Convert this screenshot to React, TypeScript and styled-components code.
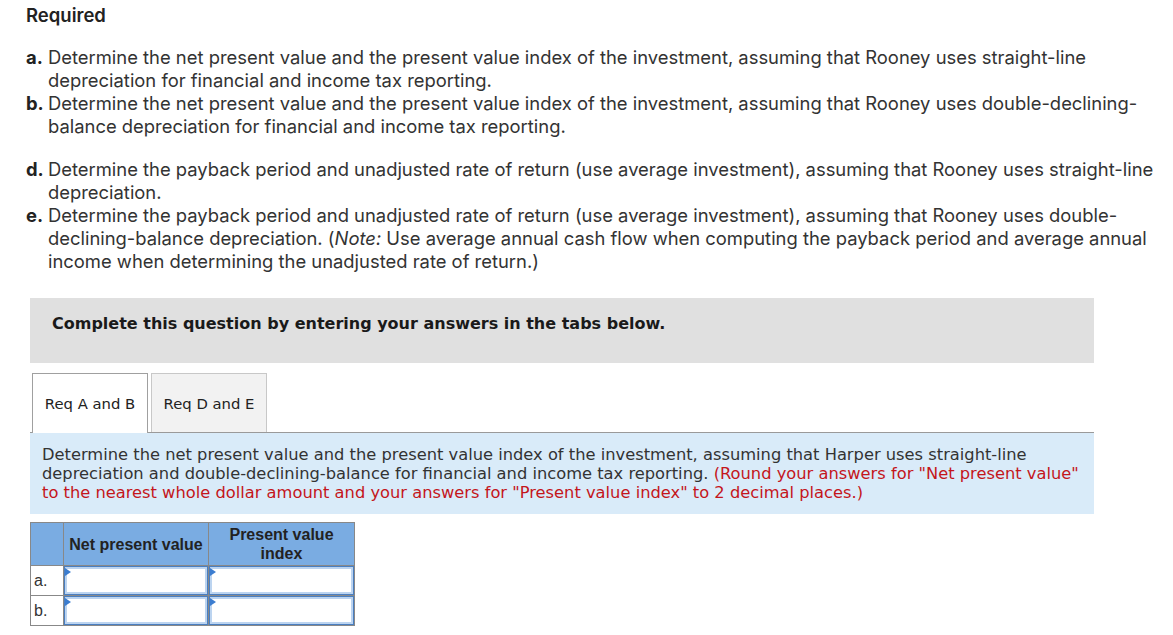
import React from "react";
import styled, { createGlobalStyle } from "styled-components";

const Global = createGlobalStyle`
  html, body { margin: 0; padding: 0; background: #fff; }
  body { font-family: Inter, "Liberation Sans", sans-serif; color: #333; }
`;

const Page = styled.div`
  width: 1173px;
  padding: 5px 0 0 26px;
  box-sizing: border-box;
`;

const Heading = styled.div`
  font-family: Inter, sans-serif;
  font-weight: 600;
  font-size: 18.5px;
  line-height: 20px;
  color: #222;
`;

const List = styled.div<{ $top: number }>`
  margin-top: ${(p) => p.$top}px;
  display: flex;
  flex-direction: column;
`;

const Item = styled.div`
  display: grid;
  grid-template-columns: 22px 1fr;
  font-family: Inter, sans-serif;
  font-size: 18.4px;
  line-height: 23px;
  color: #333;
`;

const Letter = styled.span`
  font-weight: 700;
  color: #222;
`;

const Lines = styled.span`
  display: flex;
  flex-direction: column;
  white-space: nowrap;
`;

const Section = styled.div`
  margin: 25px 0 0 4px;
  width: 1064px;
`;

const Banner = styled.div`
  background: #e0e0e0;
  height: 65px;
  box-sizing: border-box;
  padding: 16px 0 0 22px;
  font-family: "DejaVu Sans", Verdana, sans-serif;
  font-weight: 700;
  font-size: 16px;
  line-height: 20px;
  color: #1a1a1a;
`;

const TabBar = styled.div`
  margin-top: 10px;
  display: flex;
  align-items: flex-end;
  gap: 3px;
  padding-left: 2px;
  border-bottom: 1px solid #9a9a9a;
`;

const Tab = styled.div<{ $active?: boolean }>`
  width: 116px;
  box-sizing: border-box;
  display: flex;
  align-items: center;
  justify-content: center;
  font-family: "DejaVu Sans", Verdana, sans-serif;
  font-size: 14.8px;
  color: #222;
  background: ${(p) => (p.$active ? "#fff" : "#f2f2f2")};
  border: 1px solid ${(p) => (p.$active ? "#a0a0a0" : "#c8c8c8")};
  border-bottom: none;
  margin-bottom: ${(p) => (p.$active ? "-1px" : "0")};
  height: ${(p) => (p.$active ? "60px" : "59px")};
`;

const Instructions = styled.div`
  background: #d9ebf9;
  padding: 12px;
  font-family: "DejaVu Sans", Verdana, sans-serif;
  font-size: 16.3px;
  line-height: 19px;
  color: #333;
  white-space: nowrap;
`;

const Red = styled.span`
  color: #c4161c;
`;

const Table = styled.table`
  margin-top: 8px;
  border-collapse: collapse;
  font-family: "Liberation Sans", Arial, sans-serif;
`;

const HeadCell = styled.th<{ $w: number }>`
  width: ${(p) => p.$w}px;
  height: 42px;
  padding: 0;
  background: #7aace2;
  border: 1px solid #888;
  font-weight: 700;
  font-size: 16px;
  line-height: 19px;
  color: #222;
  text-align: center;
`;

const LabelCell = styled.td`
  height: 29px;
  padding: 0 0 0 3px;
  border: 1px solid #888;
  border-top: none;
  font-size: 16px;
  color: #333;
  vertical-align: middle;
`;

const InputCell = styled.td`
  padding: 0;
  border: 1px solid #888;
  border-top: none;
`;

const InputBox = styled.div`
  position: relative;
  height: 29px;
  box-sizing: border-box;
  border: 1px solid #4a7fc1;
  box-shadow: inset 0 0 0 2px #bcd4f0;
  background: #fff;
`;

const Flag = styled.span`
  position: absolute;
  left: 0;
  top: 1px;
  width: 0;
  height: 0;
  border-top: 4px solid transparent;
  border-bottom: 4px solid transparent;
  border-left: 6px solid #3b7dd0;
`;

const topItems = [
  {
    l: "a.",
    lines: [
      "Determine the net present value and the present value index of the investment, assuming that Rooney uses straight-line",
      "depreciation for financial and income tax reporting.",
    ],
  },
  {
    l: "b.",
    lines: [
      "Determine the net present value and the present value index of the investment, assuming that Rooney uses double-declining-",
      "balance depreciation for financial and income tax reporting.",
    ],
  },
];

export default function App() {
  return (
    <>
      <Global />
      <Page>
        <Heading>Required</Heading>
        <List $top={21}>
          {topItems.map((it) => (
            <Item key={it.l}>
              <Letter>{it.l}</Letter>
              <Lines>
                {it.lines.map((t) => (
                  <span key={t}>{t}</span>
                ))}
              </Lines>
            </Item>
          ))}
        </List>
        <List $top={20}>
          <Item>
            <Letter>d.</Letter>
            <Lines>
              <span>
                Determine the payback period and unadjusted rate of return (use average investment), assuming that Rooney uses straight-line
              </span>
              <span>depreciation.</span>
            </Lines>
          </Item>
          <Item>
            <Letter>e.</Letter>
            <Lines>
              <span>
                Determine the payback period and unadjusted rate of return (use average investment), assuming that Rooney uses double-
              </span>
              <span>
                declining-balance depreciation. (<i>Note:</i> Use average annual cash flow when computing the payback period and average annual
              </span>
              <span>income when determining the unadjusted rate of return.)</span>
            </Lines>
          </Item>
        </List>
        <Section>
          <Banner>Complete this question by entering your answers in the tabs below.</Banner>
          <TabBar>
            <Tab $active>Req A and B</Tab>
            <Tab>Req D and E</Tab>
          </TabBar>
          <Instructions>
            Determine the net present value and the present value index of the investment, assuming that Harper uses straight-line
            <br />
            depreciation and double-declining-balance for financial and income tax reporting.{" "}
            <Red>(Round your answers for "Net present value"</Red>
            <br />
            <Red>to the nearest whole dollar amount and your answers for "Present value index" to 2 decimal places.)</Red>
          </Instructions>
          <Table>
            <thead>
              <tr>
                <HeadCell $w={32}></HeadCell>
                <HeadCell $w={144}>Net present value</HeadCell>
                <HeadCell $w={145}>
                  Present value
                  <br />
                  index
                </HeadCell>
              </tr>
            </thead>
            <tbody>
              {["a.", "b."].map((r) => (
                <tr key={r}>
                  <LabelCell>{r}</LabelCell>
                  <InputCell>
                    <InputBox>
                      <Flag />
                    </InputBox>
                  </InputCell>
                  <InputCell>
                    <InputBox>
                      <Flag />
                    </InputBox>
                  </InputCell>
                </tr>
              ))}
            </tbody>
          </Table>
        </Section>
      </Page>
    </>
  );
}
